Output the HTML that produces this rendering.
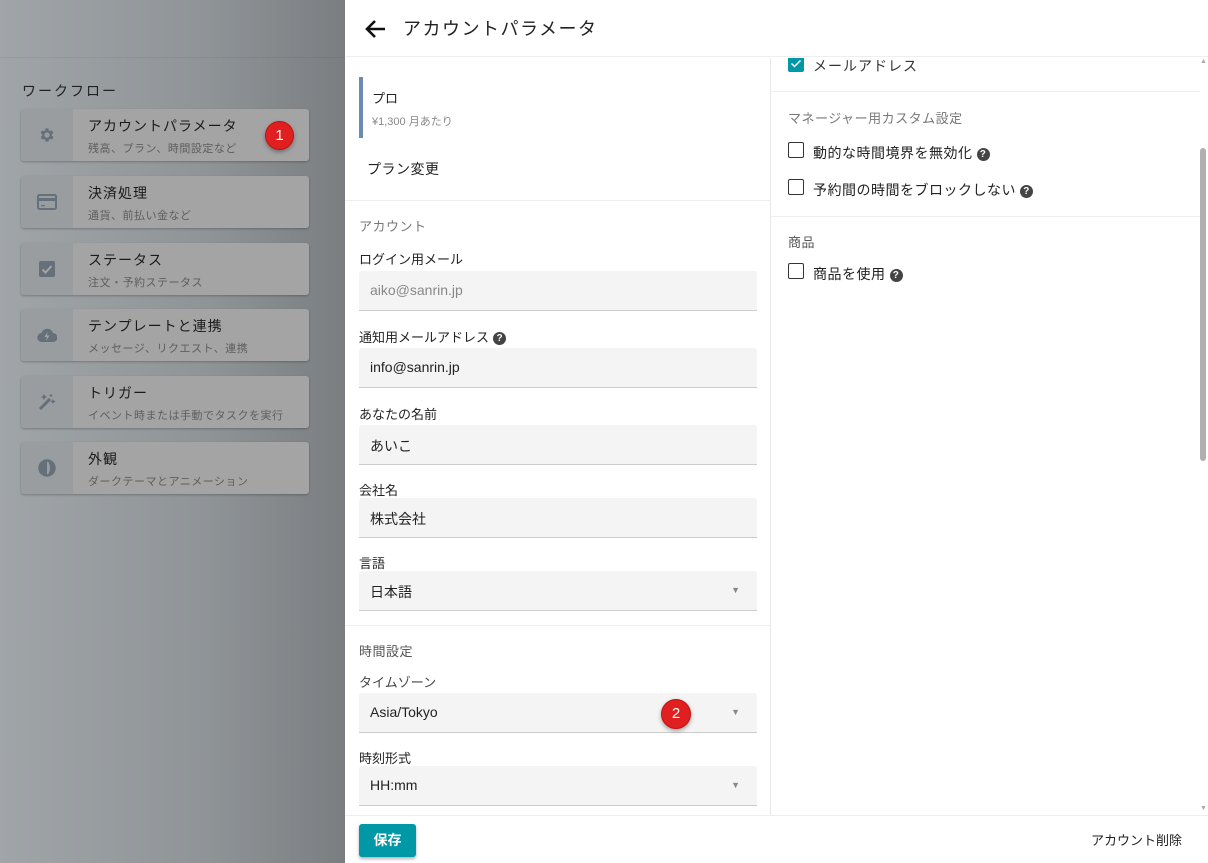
<!DOCTYPE html>
<html><head><meta charset="utf-8"><style>
*{box-sizing:border-box;margin:0;padding:0}
body{width:1208px;height:863px;overflow:hidden;position:relative;font-family:"Liberation Sans","Noto Sans CJK JP",sans-serif;background:#fff;color:#222}
.bg{position:absolute;left:0;top:0;width:345px;height:863px;background:linear-gradient(90deg,#a0a5a8 0%,#8f9497 60%,#7a7e81 100%)}
.bgline{position:absolute;left:0;top:57px;width:345px;height:1px;background:rgba(0,0,0,.05)}
.wf{position:absolute;left:22px;top:81px;font-size:14px;color:#222;letter-spacing:2px}
.card{position:absolute;left:21px;width:288px;height:52px;background:#a4a4a4;border-radius:3px;box-shadow:0 1px 2px rgba(0,0,0,.25);overflow:hidden}
.card .ic{position:absolute;left:0;top:0;width:52px;height:52px;background:#9a9d9f;display:flex;align-items:center;justify-content:center}
.card .t{position:absolute;left:67px;top:7px;font-size:14px;color:#1a1a1a;letter-spacing:1px}
.card .s{position:absolute;left:67px;top:31px;font-size:11px;color:#5e5e5e;letter-spacing:.5px}
.badge{position:absolute;width:29px;height:29px;border-radius:50%;background:#e02020;border:1px solid #c41010;color:#fff;font-size:15px;text-align:center;line-height:27px;box-shadow:0 2px 4px rgba(0,0,0,.35)}
.panel{position:absolute;left:345px;top:0;width:863px;height:863px;background:#fff}
.hdr{position:absolute;left:0;top:0;width:863px;height:57px;border-bottom:1px solid #eee}
.hdr .ti{position:absolute;left:58px;top:15px;font-size:18px;letter-spacing:1.5px;color:#222}
.col1{position:absolute;left:0;top:58px;width:426px;height:757px;border-right:1px solid #e8e8e8}
.abs{position:absolute}
.lbl{position:absolute;left:14px;font-size:13px;color:#222}
.sec{position:absolute;left:14px;font-size:13px;color:#777;letter-spacing:.5px}
.inp{position:absolute;left:14px;width:398px;height:40px;background:#f4f4f4;border-bottom:1px solid #ccc;border-radius:3px 3px 0 0;font-size:14px;padding:11px 11px;color:#222}
.inp .ar{position:absolute;right:17px;top:14px;font-size:9px;color:#888}
.hr{position:absolute;left:0;height:1px;background:#eee}
.cb{position:absolute;left:17px;width:16px;height:16px;border:1.5px solid #333;border-radius:2px}
.ct{position:absolute;left:42px;font-size:14px;color:#222;letter-spacing:.5px}
.q{display:inline-block;width:13px;height:13px;border-radius:50%;background:#444;color:#fff;font-size:10px;font-weight:bold;text-align:center;line-height:13px;vertical-align:1px;margin-left:4px}
.foot{position:absolute;left:0;top:815px;width:863px;height:48px;border-top:1px solid #eee}
</style></head><body>
<div class="bg"></div><div class="bgline"></div>
<div class="wf">ワークフロー</div>

<div class="card" style="top:109px"><div class="ic"><svg width="18" height="18" viewBox="0 0 24 24"><path fill="#66707a" d="M19.4 13a7.5 7.5 0 000-2l2.1-1.6-2-3.5-2.5 1a7 7 0 00-1.7-1L15 3.2h-4l-.4 2.7a7 7 0 00-1.7 1l-2.5-1-2 3.5L6.6 11a7.5 7.5 0 000 2l-2.1 1.6 2 3.5 2.5-1a7 7 0 001.7 1l.4 2.7h4l.4-2.7a7 7 0 001.7-1l2.5 1 2-3.5zM13 15.5a3.5 3.5 0 110-7 3.5 3.5 0 010 7z" transform="translate(-1 0)"/></svg></div><div class="t">アカウントパラメータ</div><div class="s">残高、プラン、時間設定など</div></div>
<div class="card" style="top:176px"><div class="ic"><svg width="20" height="16" viewBox="0 0 20 16"><rect x="1" y="1" width="18" height="14" rx="1.5" fill="none" stroke="#66707a" stroke-width="2"/><rect x="1" y="4" width="18" height="3" fill="#66707a"/><rect x="4" y="11" width="4" height="1.2" fill="#66707a"/></svg></div><div class="t">決済処理</div><div class="s">通貨、前払い金など</div></div>
<div class="card" style="top:243px"><div class="ic"><svg width="16" height="16" viewBox="0 0 16 16"><rect width="16" height="16" rx="2" fill="#66707a"/><path d="M3.5 8.5l3 3 6-6.5" stroke="#a4a4a4" stroke-width="2" fill="none"/></svg></div><div class="t">ステータス</div><div class="s">注文・予約ステータス</div></div>
<div class="card" style="top:309px"><div class="ic"><svg width="20" height="14" viewBox="0 0 20 14"><path d="M5 14a4.5 4.5 0 01-.5-9A6 6 0 0116 5a4.5 4.5 0 010 9z" fill="#66707a"/><path d="M10.5 4l-3 5h2.5l-1 4 3.5-5.5h-2.5z" fill="#a4a4a4"/></svg></div><div class="t">テンプレートと連携</div><div class="s">メッセージ、リクエスト、連携</div></div>
<div class="card" style="top:376px"><div class="ic"><svg width="18" height="18" viewBox="0 0 18 18"><path d="M2 16L12 6" stroke="#66707a" stroke-width="3"/><path d="M6 2l.7 1.5L8 4l-1.3.5L6 6l-.7-1.5L4 4l1.3-.5zM13 1v3M11.5 2.5h3M15 7l.5 1 1 .5-1 .5-.5 1-.5-1-1-.5 1-.5z" stroke="#66707a" stroke-width="1" fill="#66707a"/></svg></div><div class="t">トリガー</div><div class="s">イベント時または手動でタスクを実行</div></div>
<div class="card" style="top:442px"><div class="ic"><svg width="18" height="18" viewBox="0 0 18 18"><circle cx="9" cy="9" r="7.5" fill="none" stroke="#66707a" stroke-width="2.5"/><path d="M9 1.5a7.5 7.5 0 010 15c2-2 3-4.5 3-7.5S11 3.5 9 1.5z" fill="#66707a"/><path d="M9 1.5A7.5 7.5 0 009 16.5z" fill="#66707a"/></svg></div><div class="t">外観</div><div class="s">ダークテーマとアニメーション</div></div>
<div class="badge" style="left:265px;top:121px">1</div>

<div class="panel">
 <div class="hdr"><svg class="abs" style="left:19px;top:19px" width="22" height="20" viewBox="0 0 22 20"><path d="M21 10H3M11 2L3 10l8 8" stroke="#111" stroke-width="2.6" fill="none"/></svg><div class="ti">アカウントパラメータ</div></div>
 <div class="col1">
  <div class="abs" style="left:14px;top:19px;width:4px;height:61px;background:#6b8bb0"></div>
  <div class="abs" style="left:27px;top:30px;font-size:13px">プロ</div>
  <div class="abs" style="left:27px;top:55px;font-size:11px;color:#888">¥1,300 月あたり</div>
  <div class="abs" style="left:22px;top:101px;font-size:14px;letter-spacing:.5px">プラン変更</div>
  <div class="hr" style="top:142px;width:426px"></div>
  <div class="sec" style="top:158px">アカウント</div>
  <div class="lbl" style="top:191px">ログイン用メール</div>
  <div class="inp" style="top:213px;color:#888">aiko@sanrin.jp</div>
  <div class="lbl" style="top:269px">通知用メールアドレス<span class="q">?</span></div>
  <div class="inp" style="top:290px">info@sanrin.jp</div>
  <div class="lbl" style="top:346px">あなたの名前</div>
  <div class="inp" style="top:367px">あいこ</div>
  <div class="lbl" style="top:422px">会社名</div>
  <div class="inp" style="top:440px">株式会社</div>
  <div class="lbl" style="top:495px">言語</div>
  <div class="inp" style="top:513px">日本語<span class="ar">▼</span></div>
  <div class="hr" style="top:567px;width:426px"></div>
  <div class="sec" style="top:583px;color:#555">時間設定</div>
  <div class="lbl" style="top:614px;color:#444">タイムゾーン</div>
  <div class="inp" style="top:635px">Asia/Tokyo<span class="ar">▼</span></div>
  <div class="lbl" style="top:690px">時刻形式</div>
  <div class="inp" style="top:708px">HH:mm<span class="ar">▼</span></div>
 </div>
 <div class="badge" style="left:316px;top:699px;width:30px;height:30px;line-height:28px">2</div>
 <div class="abs" style="left:426px;top:58px;width:429px;height:757px">
  <div class="abs" style="left:17px;top:0;width:16px;height:14px;background:#0097a7;border-radius:0 0 2px 2px"><svg width="16" height="14" viewBox="0 0 16 14"><path d="M3.5 5.5l3 3 6-6" stroke="#fff" stroke-width="1.5" fill="none"/></svg></div>
  <div class="ct" style="top:-2px;color:#333;letter-spacing:1px">メールアドレス</div>
  <div class="hr" style="top:33px;width:429px"></div>
  <div class="sec" style="left:17px;top:50px">マネージャー用カスタム設定</div>
  <div class="cb" style="top:84px"></div><div class="ct" style="top:85px">動的な時間境界を無効化<span class="q">?</span></div>
  <div class="cb" style="top:121px"></div><div class="ct" style="top:122px">予約間の時間をブロックしない<span class="q">?</span></div>
  <div class="hr" style="top:158px;width:429px"></div>
  <div class="sec" style="left:17px;top:174px;color:#555">商品</div>
  <div class="cb" style="top:205px"></div><div class="ct" style="top:206px">商品を使用<span class="q">?</span></div>
 </div>
 <div class="abs" style="left:855px;top:148px;width:6px;height:313px;background:#b0b0b0;border-radius:3px"></div>
 <div class="abs" style="left:855px;top:58px;font-size:7px;color:#aaa">▲</div>
 <div class="abs" style="left:855px;top:805px;font-size:7px;color:#aaa">▼</div>
 <div class="foot">
  <div class="abs" style="left:14px;top:8px;width:57px;height:33px;background:#0097a7;border-radius:3px;color:#fff;font-size:14px;font-weight:bold;text-align:center;line-height:33px;box-shadow:0 2px 3px rgba(0,0,0,.3)">保存</div>
  <div class="abs" style="left:746px;top:14px;font-size:13px;color:#222">アカウント削除</div>
 </div>
</div>
</body></html>
